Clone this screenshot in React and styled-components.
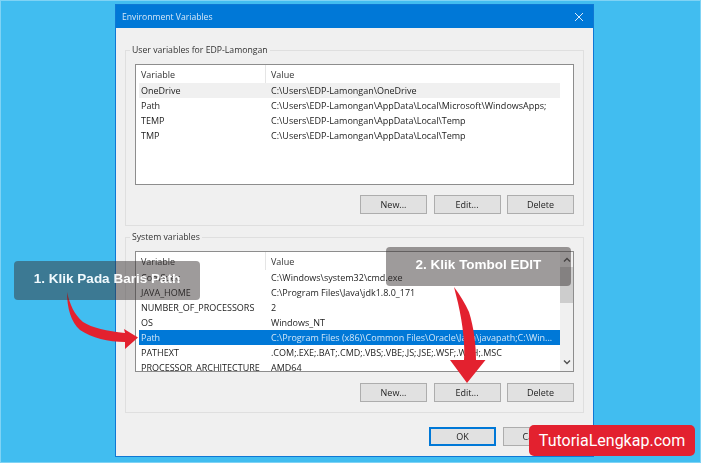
import React from "react";
import styled, { createGlobalStyle } from "styled-components";

const Global = createGlobalStyle`
  html, body { margin: 0; padding: 0; background: #41bdf0; }
  body { width: 701px; height: 463px; overflow: hidden; font-family: "Open Sans", "Noto Sans", sans-serif; }
`;

const Page = styled.div`
  position: relative;
  width: 701px;
  height: 463px;
  box-sizing: border-box;
  padding: 3px 106px 5px 114px;
  background: #41bdf0;
  border: 1px solid #7fd3f5;
  overflow: hidden;
`;

const Dialog = styled.div`
  height: 100%;
  box-sizing: border-box;
  display: flex;
  flex-direction: column;
  background: #f0f0f0;
  border: 1px solid #0f78d4;
  filter: blur(0.3px);
`;

const TitleBar = styled.div`
  height: 23px;
  flex: none;
  display: flex;
  align-items: center;
  justify-content: space-between;
  padding: 0 9px 0 6px;
  background: #0078d7;
  color: #d5e8f8;
  font-size: 8.6px;
`;

const Body = styled.div`
  flex: 1;
  display: flex;
  flex-direction: column;
  padding: 16px 9px 0 9px;
`;

const Group = styled.fieldset`
  margin: 0 0 ${(p) => p.$mb}px 0;
  padding: 8px 9px 0 9px;
  height: 182px;
  flex: none;
  box-sizing: border-box;
  border: 1px solid #dfdfdf;
  min-width: 0;
`;

const Legend = styled.legend`
  margin-left: -5px;
  padding: 0 2px;
  font-size: 8.7px;
  line-height: 12px;
  color: #333;
`;

const ListBox = styled.div`
  position: relative;
  height: 121px;
  box-sizing: border-box;
  border: 1px solid #8d8d8d;
  background: #fff;
  overflow: hidden;
  display: flex;
`;

const ListInner = styled.div`
  flex: 1;
  min-width: 0;
  padding-left: 3px;
`;

const HeaderRow = styled.div`
  height: 18px;
  display: flex;
  align-items: center;
  color: #333;
  font-size: 9px;
`;

const HeadA = styled.div`
  width: 127px;
  height: 100%;
  display: flex;
  align-items: center;
  padding-left: 2px;
  box-sizing: border-box;
  border-right: 1px solid #e5e5e5;
`;

const HeadB = styled.div`
  padding-left: 5px;
`;

const Row = styled.div`
  height: 15px;
  display: flex;
  align-items: center;
  font-size: 9px;
  white-space: nowrap;
  background: ${(p) => (p.$sel ? "#0078d7" : p.$soft ? "#f0f0f0" : "transparent")};
  color: ${(p) => (p.$sel ? "#cfe6f8" : "#222")};
`;

const CellA = styled.div`
  width: 132px;
  flex: none;
  padding-left: 2px;
  box-sizing: border-box;
`;

const CellB = styled.div`
  flex: none;
`;

const Scrollbar = styled.div`
  width: 13px;
  flex: none;
  display: flex;
  flex-direction: column;
  align-items: center;
  justify-content: space-between;
  background: ${(p) => (p.$blank ? "#fff" : "#f0f0f0")};
  position: relative;
  padding: 5px 0 6px;
  box-sizing: border-box;
`;

const Thumb = styled.div`
  position: absolute;
  left: 0;
  right: 0;
  top: 15px;
  height: 36px;
  background: #cdcdcd;
`;

const ButtonRow = styled.div`
  display: flex;
  justify-content: flex-end;
  gap: 6.5px;
  margin-top: ${(p) => p.$mt}px;
`;

const Btn = styled.div`
  width: 67px;
  height: 19px;
  box-sizing: border-box;
  display: flex;
  align-items: center;
  justify-content: center;
  background: #e1e1e1;
  border: 1px solid ${(p) => (p.$primary ? "#0078d7" : "#adadad")};
  box-shadow: ${(p) => (p.$primary ? "inset 0 0 0 1px #0078d7" : "none")};
  font-size: 9px;
  color: #222;
`;

const Footer = styled.div`
  display: flex;
  gap: 7px;
  padding-left: 304px;
`;

const Callout = styled.div`
  position: absolute;
  left: ${(p) => p.$x - 1}px;
  top: ${(p) => p.$y - 1}px;
  width: ${(p) => p.$w}px;
  height: 39px;
  padding-bottom: 4px;
  box-sizing: border-box;
  display: flex;
  align-items: center;
  justify-content: center;
  border-radius: 4px;
  background: rgba(55, 50, 50, 0.53);
  color: #fff;
  font: bold 13.5px "Liberation Sans", Arial, sans-serif;
  opacity: 0.92;
`;

const Brand = styled.div`
  position: absolute;
  left: 528px;
  top: 424px;
  width: 166px;
  height: 31px;
  display: flex;
  align-items: center;
  justify-content: center;
  border-radius: 5px;
  background: #e3212f;
  color: #fff;
  font: 16px "Roboto", "Open Sans", sans-serif;
`;

const ArrowLayer = styled.svg`
  position: absolute;
  left: -1px;
  top: -1px;
  width: 701px;
  height: 463px;
  pointer-events: none;
`;

const Chevron = ({ up }) => (
  <svg width="8" height="6" viewBox="0 0 8 6" style={{ position: "relative" }}>
    <path d={up ? "M1 4.5 L4 1.5 L7 4.5" : "M1 1.5 L4 4.5 L7 1.5"} fill="none" stroke="#505050" strokeWidth="1.4" />
  </svg>
);

const Table = ({ rows, sel, soft }) => (
  <ListInner>
    <HeaderRow>
      <HeadA>Variable</HeadA>
      <HeadB>Value</HeadB>
    </HeaderRow>
    {rows.map(([a, b], i) => (
      <Row key={a} $sel={i === sel} $soft={i === soft}>
        <CellA>{a}</CellA>
        <CellB>{b}</CellB>
      </Row>
    ))}
  </ListInner>
);

const userRows = [
  ["OneDrive", "C:\\Users\\EDP-Lamongan\\OneDrive"],
  ["Path", "C:\\Users\\EDP-Lamongan\\AppData\\Local\\Microsoft\\WindowsApps;"],
  ["TEMP", "C:\\Users\\EDP-Lamongan\\AppData\\Local\\Temp"],
  ["TMP", "C:\\Users\\EDP-Lamongan\\AppData\\Local\\Temp"],
];

const sysRows = [
  ["ComSpec", "C:\\Windows\\system32\\cmd.exe"],
  ["JAVA_HOME", "C:\\Program Files\\Java\\jdk1.8.0_171"],
  ["NUMBER_OF_PROCESSORS", "2"],
  ["OS", "Windows_NT"],
  ["Path", "C:\\Program Files (x86)\\Common Files\\Oracle\\Java\\javapath;C:\\Win..."],
  ["PATHEXT", ".COM;.EXE;.BAT;.CMD;.VBS;.VBE;.JS;.JSE;.WSF;.WSH;.MSC"],
  ["PROCESSOR_ARCHITECTURE", "AMD64"],
];

export default function App() {
  return (
    <Page>
      <Global />
      <Dialog>
        <TitleBar>
          <span>Environment Variables</span>
          <svg width="10" height="10" viewBox="0 0 10 10">
            <path d="M1 1 L9 9 M9 1 L1 9" stroke="#dcebf9" strokeWidth="1" fill="none" />
          </svg>
        </TitleBar>
        <Body>
          <Group $mb={5}>
            <Legend>User variables for EDP-Lamongan</Legend>
            <ListBox>
              <Table rows={userRows} soft={0} />
              <Scrollbar $blank />
            </ListBox>
            <ButtonRow $mt={10}>
              <Btn>New...</Btn>
              <Btn>Edit...</Btn>
              <Btn>Delete</Btn>
            </ButtonRow>
          </Group>
          <Group $mb={14}>
            <Legend>System variables</Legend>
            <ListBox>
              <Table rows={sysRows} sel={4} />
              <Scrollbar>
                <Thumb />
                <Chevron up />
                <Chevron />
              </Scrollbar>
            </ListBox>
            <ButtonRow $mt={11}>
              <Btn>New...</Btn>
              <Btn>Edit...</Btn>
              <Btn>Delete</Btn>
            </ButtonRow>
          </Group>
          <Footer>
            <Btn $primary>OK</Btn>
            <Btn>Cancel</Btn>
          </Footer>
        </Body>
      </Dialog>
      <ArrowLayer viewBox="0 0 701 463">
        <path fill="#e3212f" d="M67 292 C70 305 74 314 83 322 C92 328 107 331 125 333 L124 329 L138 337.5 L125 349 L125 342 C108 342 92 338 80 330 C71 322 67 308 67 292 Z" />
        <path fill="#e3212f" d="M454 287 C460 295 465 303 469 312 C474 328 476 345 476 360 L485.5 360 L467 383 L450 360 L464 360 C465 345 463 325 458 303 Z" />
      </ArrowLayer>
      <Callout $x={14} $y={261} $w={186}>1. Klik Pada Baris Path</Callout>
      <Callout $x={386} $y={247} $w={185}>2. Klik Tombol EDIT</Callout>
      <Brand>TutoriaLengkap.com</Brand>
    </Page>
  );
}
